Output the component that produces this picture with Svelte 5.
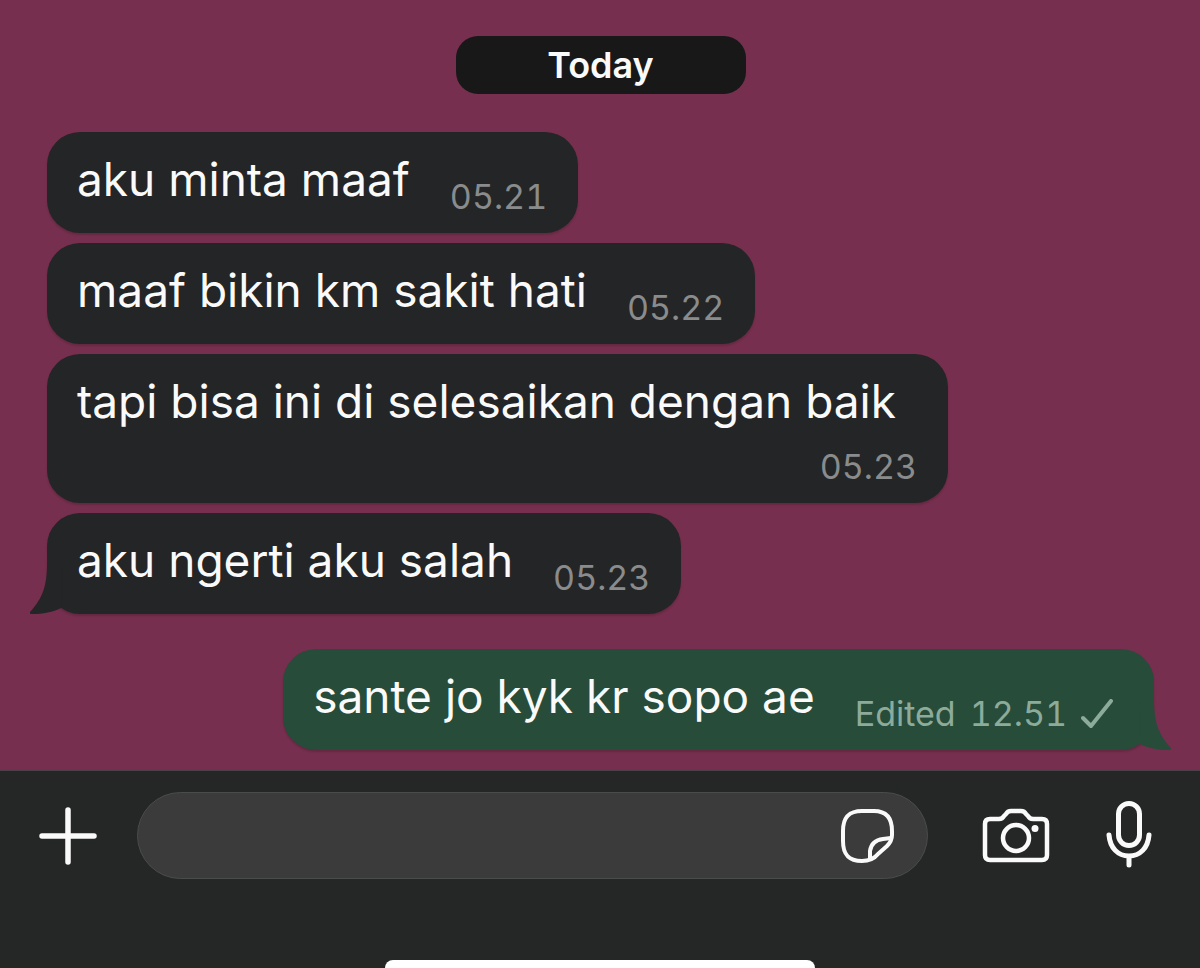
<script>
  let draft = $state('');

  const messages = [
    { id: 1, text: 'aku minta maaf', time: '05.21' },
    { id: 2, text: 'maaf bikin km sakit hati', time: '05.22' },
    { id: 3, text: 'tapi bisa ini di selesaikan dengan baik', time: '05.23' },
    { id: 4, text: 'aku ngerti aku salah', time: '05.23', tail: true },
    { id: 5, text: 'sante jo kyk kr sopo ae', time: '12.51', mine: true, edited: true, tail: true }
  ];
</script>

<div class="screen">
  <main class="chat">
    <div class="day">Today</div>

    <ul class="messages">
      {#each messages as message (message.id)}
        <li class="bubble" class:mine={message.mine}>
          <span class="text">{message.text}</span>
          <span class="meta">
            {#if message.edited}<span>Edited</span>{/if}
            <time>{message.time}</time>
            {#if message.mine}
              <svg class="check" viewBox="0 0 32 30" aria-label="Sent">
                <path d="M2 19 L10 27 L30 2" />
              </svg>
            {/if}
          </span>
          {#if message.tail}
            <svg class="tail" viewBox="0 0 32 50" aria-hidden="true">
              <path d="M17 0 C17 21 13 34 0 48 Q-1 50 2 50 C13 50 23 48 31 44 L32 0 Z" />
            </svg>
          {/if}
        </li>
      {/each}
    </ul>
  </main>

  <footer class="composer">
    <button class="icon-btn" aria-label="Attach">
      <svg width="58" height="58" viewBox="0 0 58 58">
        <path d="M29 3 V55 M3 29 H55" stroke-width="5.5" />
      </svg>
    </button>

    <div class="field">
      <input type="text" aria-label="Message" bind:value={draft} />
      <button class="icon-btn" aria-label="Stickers">
        <svg width="54" height="54" viewBox="0 0 54 54">
          <path d="M21 2 H33 C46 2 51 10 51 22 V26 C51 31 49 34 46 37 L37 45 C33 50 28 52 21 52 C7 52 2 45 2 32 V22 C2 8 8 2 21 2 Z" stroke-width="4" />
          <path d="M50 29 L42 30 C34 31 30 35 29 42 L29 50" stroke-width="4" />
        </svg>
      </button>
    </div>

    <div class="actions">
      <button class="icon-btn" aria-label="Camera">
        <svg width="68" height="54" viewBox="0 0 68 54">
          <path d="M8 10 H17 C20 10 21 9 22 7 L24 5 C25 3 26 2 29 2 H39 C42 2 43 3 44 5 L46 7 C47 9 48 10 51 10 H60 Q65 10 65 15 V46 Q65 51 60 51 H8 Q3 51 3 46 V15 Q3 10 8 10 Z" stroke-width="4.5" />
          <circle cx="34" cy="29" r="13" stroke-width="4.5" />
          <circle class="dot" cx="53" cy="19.5" r="3.5" />
        </svg>
      </button>
      <button class="icon-btn" aria-label="Record voice message">
        <svg width="46" height="68" viewBox="0 0 46 68">
          <rect x="12.5" y="1.5" width="21" height="42" rx="10.5" stroke-width="5" />
          <path d="M3 33 C4 46 12 54 23 54 C34 54 42 46 43 33 M23 54 V63" stroke-width="5" />
        </svg>
      </button>
    </div>

    <div class="home-indicator"></div>
  </footer>
</div>

<style>
  :global(body) {
    background: #252727;
  }

  .screen {
    display: flex;
    flex-direction: column;
    min-height: 100vh;
    font-family: Inter, "Liberation Sans", sans-serif;
    color: #fafafa;
  }

  .chat {
    flex: 1;
    display: flex;
    flex-direction: column;
    align-items: center;
    padding: 36px 46px 20px 47px;
    background: #762f4e;
  }

  .day {
    box-sizing: border-box;
    min-width: 290px;
    border-radius: 22px;
    background: #181818;
    font-size: 36px;
    font-weight: 600;
    line-height: 58px;
    text-align: center;
  }

  .messages {
    align-self: stretch;
    display: flex;
    flex-direction: column;
    align-items: flex-start;
    gap: 10px;
    margin: 38px 0 0;
    padding: 0;
    list-style: none;
  }

  .bubble {
    position: relative;
    display: flex;
    flex-wrap: wrap;
    align-items: flex-end;
    justify-content: flex-end;
    gap: 8px 40px;
    box-sizing: border-box;
    max-width: calc(100% - 206px);
    padding: 19px 31px 16px 30px;
    border-radius: 33px;
    background: #232526;
    box-shadow: 0 2px 2px rgba(0, 0, 0, 0.15);
  }

  .bubble.mine {
    align-self: flex-end;
    margin-top: 25px;
    padding-right: 41px;
    background: #274c3a;
  }

  .text {
    flex-grow: 1;
    padding-bottom: 10px;
    font-size: 46px;
    line-height: 56px;
  }

  .meta {
    display: flex;
    align-items: center;
    gap: 14px;
    font-size: 34px;
    font-variant-numeric: tabular-nums;
    line-height: 40px;
    color: #8a8b8c;
  }

  .mine .meta {
    color: #8dab9b;
  }

  .check {
    width: 32px;
    height: 30px;
    fill: none;
    stroke: currentColor;
    stroke-width: 4;
    stroke-linecap: round;
    stroke-linejoin: round;
  }

  .tail {
    position: absolute;
    left: -17px;
    bottom: 0;
    width: 32px;
    height: 50px;
    fill: #232526;
  }

  .mine .tail {
    left: auto;
    right: -17px;
    transform: scaleX(-1);
    fill: #274c3a;
  }

  .composer {
    position: relative;
    display: flex;
    align-items: center;
    gap: 40px;
    padding: 21px 48px 89px 39px;
    border-top: 1px solid #4a4147;
    background: #252727;
  }

  .icon-btn {
    display: flex;
    padding: 0;
    border: 0;
    background: none;
    cursor: pointer;
  }

  .icon-btn svg {
    overflow: visible;
    fill: none;
    stroke: #fafafa;
    stroke-linecap: round;
    stroke-linejoin: round;
  }

  .icon-btn .dot {
    fill: #fafafa;
    stroke: none;
  }

  .field {
    flex: 1;
    display: flex;
    align-items: center;
    box-sizing: border-box;
    height: 87px;
    padding: 0 32px 0 36px;
    border: 1px solid #4a4b4b;
    border-radius: 44px;
    background: #3c3b3b;
  }

  .field input {
    flex: 1;
    min-width: 0;
    border: 0;
    outline: 0;
    background: none;
    color: inherit;
    font: inherit;
    font-size: 40px;
  }

  .actions {
    display: flex;
    align-items: center;
    gap: 56px;
    margin-left: 14px;
  }

  .home-indicator {
    position: absolute;
    bottom: 0;
    left: 50%;
    width: 430px;
    height: 8px;
    border-radius: 8px 8px 0 0;
    background: #fff;
    transform: translateX(-50%);
  }
</style>
